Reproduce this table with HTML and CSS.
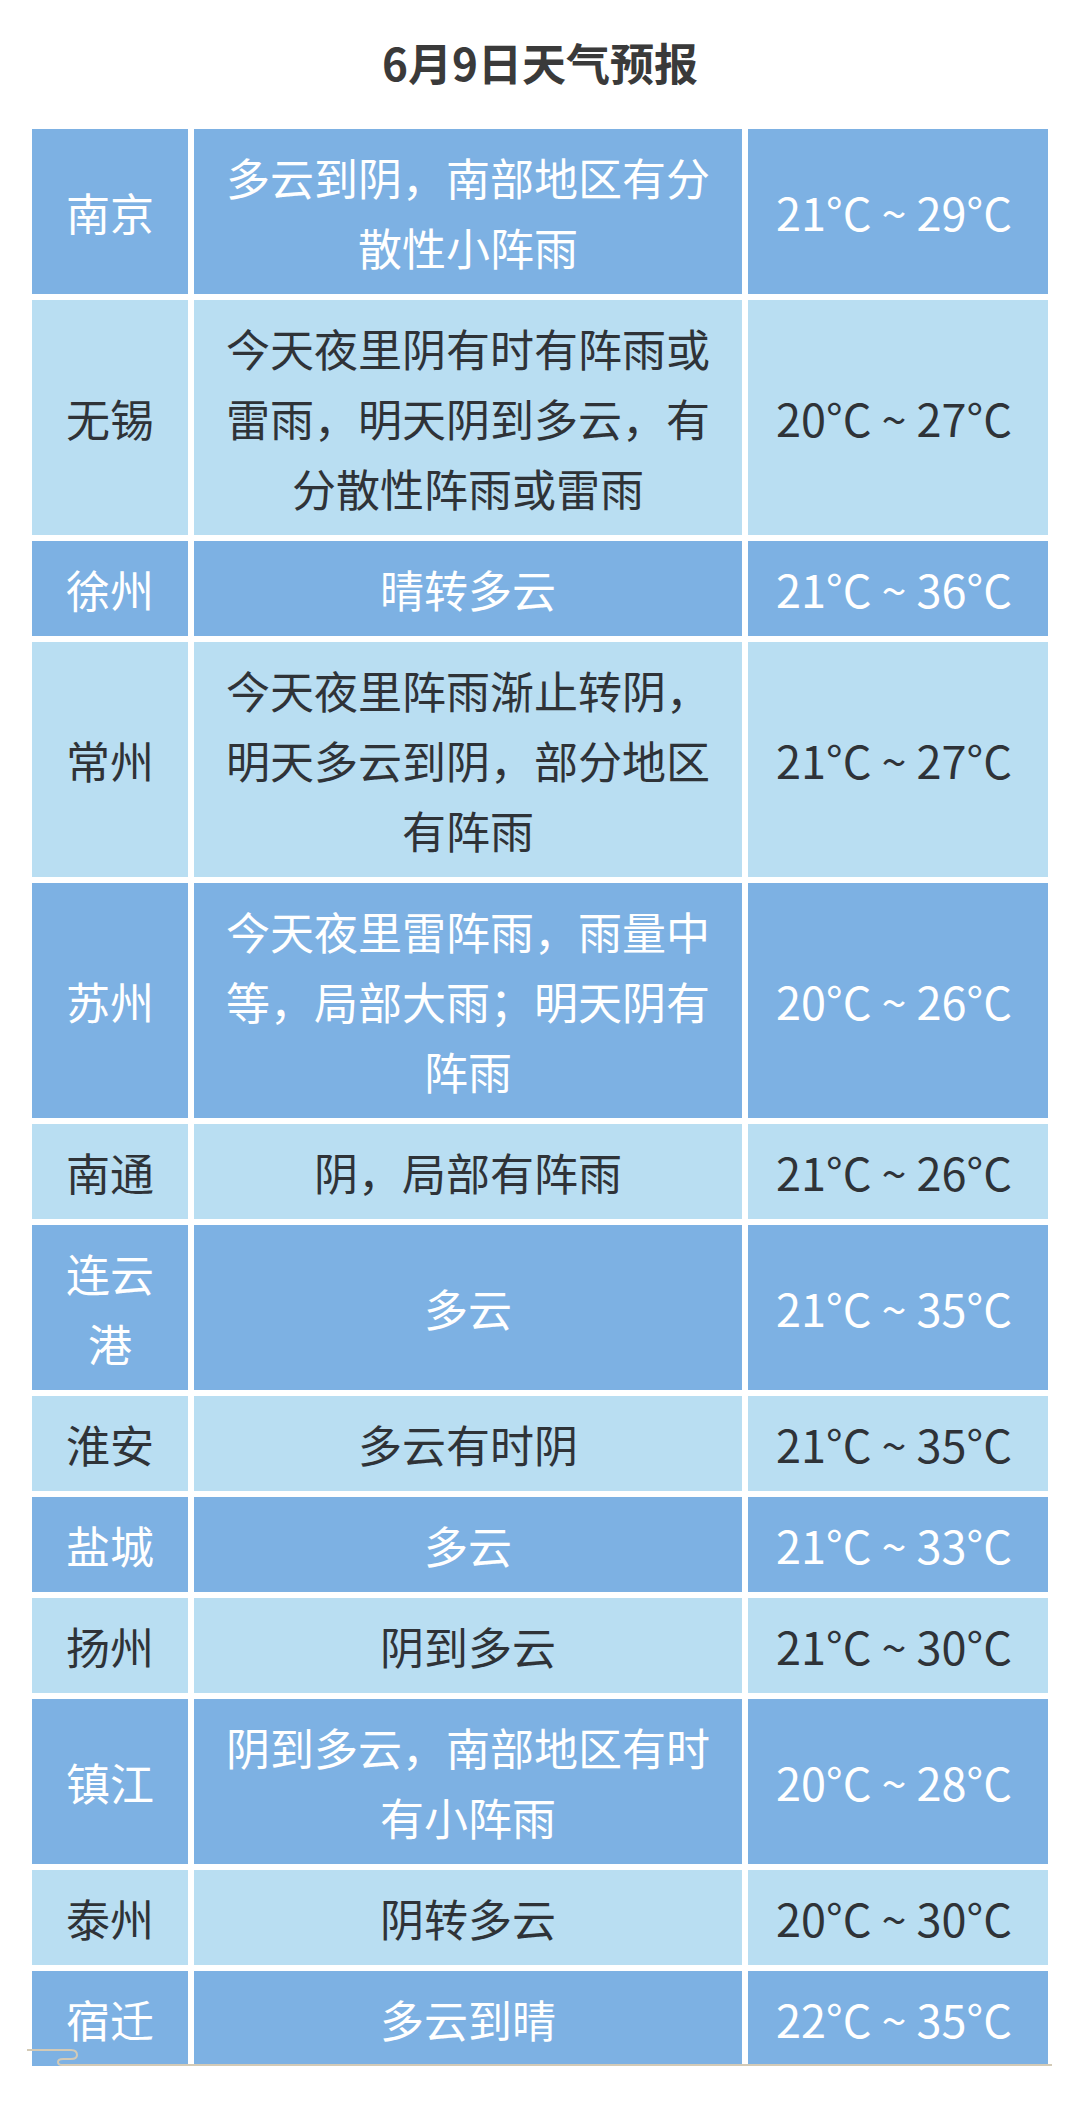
FILE: index.html
```html
<!DOCTYPE html>
<html lang="zh-CN">
<head>
<meta charset="utf-8">
<title>6月9日天气预报</title>
<link rel="stylesheet" href="styles.css">
</head>
<body>
<h1 class="title">6月9日天气预报</h1>
<div class="table">
  <div class="row dark"><div class="cell city">南京</div><div class="cell desc">多云到阴，南部地区有分散性小阵雨</div><div class="cell temp">21°C ~ 29°C</div></div>
  <div class="row light"><div class="cell city">无锡</div><div class="cell desc">今天夜里阴有时有阵雨或雷雨，明天阴到多云，有分散性阵雨或雷雨</div><div class="cell temp">20°C ~ 27°C</div></div>
  <div class="row dark"><div class="cell city">徐州</div><div class="cell desc">晴转多云</div><div class="cell temp">21°C ~ 36°C</div></div>
  <div class="row light"><div class="cell city">常州</div><div class="cell desc">今天夜里阵雨渐止转阴，明天多云到阴，部分地区有阵雨</div><div class="cell temp">21°C ~ 27°C</div></div>
  <div class="row dark"><div class="cell city">苏州</div><div class="cell desc">今天夜里雷阵雨，雨量中等，局部大雨；明天阴有阵雨</div><div class="cell temp">20°C ~ 26°C</div></div>
  <div class="row light"><div class="cell city">南通</div><div class="cell desc">阴，局部有阵雨</div><div class="cell temp">21°C ~ 26°C</div></div>
  <div class="row dark"><div class="cell city">连云港</div><div class="cell desc">多云</div><div class="cell temp">21°C ~ 35°C</div></div>
  <div class="row light"><div class="cell city">淮安</div><div class="cell desc">多云有时阴</div><div class="cell temp">21°C ~ 35°C</div></div>
  <div class="row dark"><div class="cell city">盐城</div><div class="cell desc">多云</div><div class="cell temp">21°C ~ 33°C</div></div>
  <div class="row light"><div class="cell city">扬州</div><div class="cell desc">阴到多云</div><div class="cell temp">21°C ~ 30°C</div></div>
  <div class="row dark"><div class="cell city">镇江</div><div class="cell desc">阴到多云，南部地区有时有小阵雨</div><div class="cell temp">20°C ~ 28°C</div></div>
  <div class="row light"><div class="cell city">泰州</div><div class="cell desc">阴转多云</div><div class="cell temp">20°C ~ 30°C</div></div>
  <div class="row dark"><div class="cell city">宿迁</div><div class="cell desc">多云到晴</div><div class="cell temp">22°C ~ 35°C</div></div>
  <svg class="deco" width="1030" height="20" viewBox="0 0 1030 20" aria-hidden="true">
    <path d="M0 3 H44 Q50 3 50 8 Q50 12 44 12 H36 Q31 12 31 15 Q31 18 35 18 H1025" fill="none" stroke="#d3cab6" stroke-width="2"/>
  </svg>
</div>
</body>
</html>
```

FILE: styles.css
```css
html, body {
  margin: 0;
  padding: 0;
  background: #ffffff;
}

body {
  width: 1080px;
  font-family: "Noto Sans CJK SC", "Noto Sans", sans-serif;
}

.title {
  margin: 0 0 45px;
  padding-top: 40px;
  font-size: 44px;
  line-height: 44px;
  font-weight: 700;
  text-align: center;
  color: #3a3a3a;
}

.table {
  position: relative;
  margin: 0 32px;
  display: flex;
  flex-direction: column;
  gap: 6px;
}

.row {
  display: grid;
  grid-template-columns: 156px 548px 1fr;
  column-gap: 6px;
}

.cell {
  display: flex;
  align-items: center;
  justify-content: center;
  text-align: center;
  padding: 12.5px 20px;
  font-size: 44px;
  line-height: 70px;
}

.desc {
  padding: 12.5px 22px;
}

.temp {
  font-size: 45px;
  padding: 12.5px 8px 12.5px 0;
}

.dark .cell {
  background: #7db1e3;
  color: #ffffff;
}

.light .cell {
  background: #b9def2;
  color: #2f3338;
}

.deco {
  position: absolute;
  left: -5px;
  bottom: -1px;
}
```
